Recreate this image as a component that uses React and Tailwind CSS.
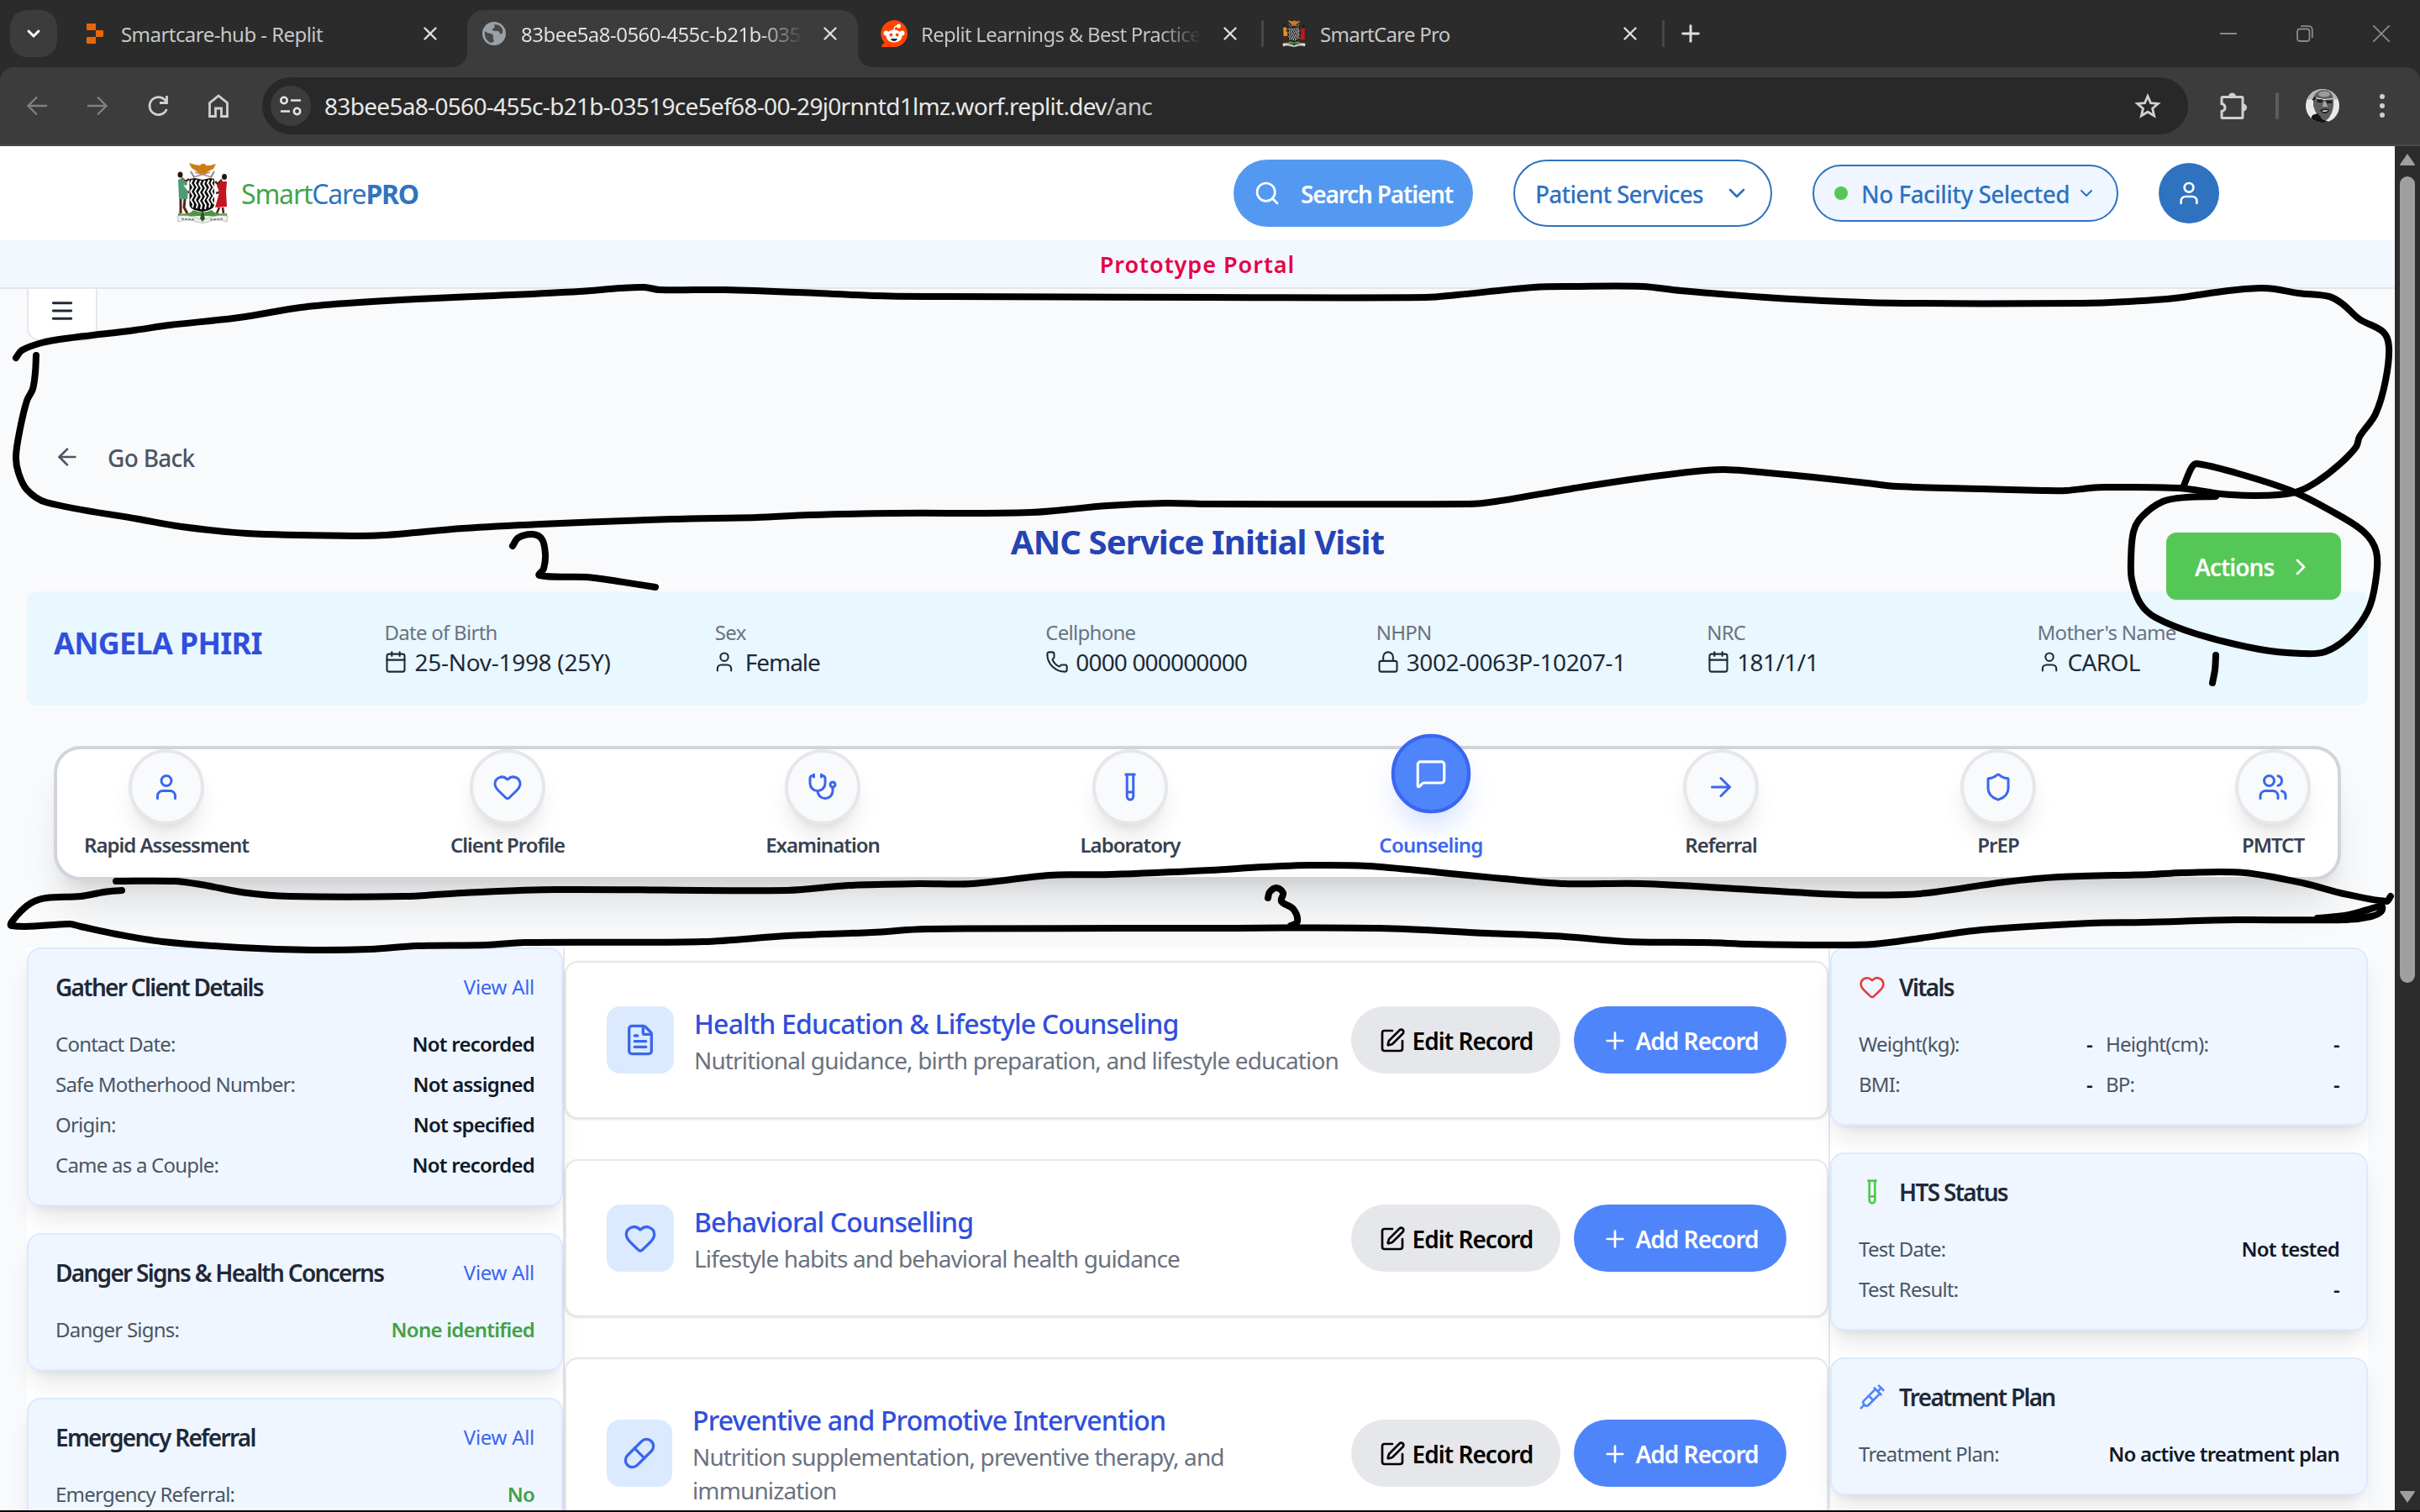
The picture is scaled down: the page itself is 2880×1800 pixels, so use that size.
import React from "react";
import {
  Calendar, User, Phone, Lock, Heart, Stethoscope, TestTube, MessageSquare, ArrowRight, ArrowLeft, Shield, Users,
  FileText, Pill, Syringe, Plus, Search, ChevronDown, ChevronRight, Menu, X, SquarePen,
} from "lucide-react";

function Crest({ className, man = "#4f9a75" }) {
  return (
    <svg viewBox="0 0 62 72" className={className}>
      <path d="M15 0 L22 2 L28 3 L30 1 L34 1 L35 3 L40 3 L47 1 L44 7 L38 10 L34 13 L28 13 L24 10 L18 6Z" fill="#cf7d12" />
      <path d="M20 17 L40 11 M42 17 L22 11" stroke="#b98a78" strokeWidth="1.500" />
      <path d="M17 10 L21 17 M45 10 L41 17" stroke="#8a8a8a" strokeWidth="2" />
      <path d="M15.500 19 L22 18 L31 20 L40 18 L45 19 V50 Q44 56 31 58 Q16 56 15.500 50Z" fill="#0c0c0c" />
      <path d="M19 20 l-2 4 l3 5 l-3 5 l3 5 l-3 5 l3 5 l-1 4 M24 20 l-2 4 l3 5 l-3 5 l3 5 l-3 5 l3 5 l-1 5 M29 21 l-2 4 l3 5 l-3 5 l3 5 l-3 5 l3 5 l-1 5 M34 21 l-2 4 l3 5 l-3 5 l3 5 l-3 5 l3 5 l-1 5 M39 20 l-2 4 l3 5 l-3 5 l3 5 l-3 5 l3 5 l-1 4 M43.500 20 l-2 4 l3 5 l-3 5 l3 5 l-3 5 l3 5" stroke="#fff" strokeWidth="1.900" fill="none" strokeLinejoin="round" />
      <path d="M6 18 L11 22 L15 19 M6 32 L15 35 M54 20 L49 25 L46 22 M54 34 L47 36" stroke="#5a2416" strokeWidth="2.500" fill="none" />
      <ellipse cx="4.500" cy="14" rx="3" ry="3.500" fill="#2a150e" />
      <path d="M2 20 L7 18 L13 24 L12 27 L8 26 L14 34 L13 43 L3 43Z" fill={man} />
      <path d="M5 43 L5 60 M10 43 L9 53 L13 60" stroke="#5a2416" strokeWidth="3" fill="none" />
      <ellipse cx="57" cy="16.500" rx="3" ry="3.500" fill="#2a150e" />
      <path d="M53 22 L60 22 L59 34 L60 52 L46 53 L51 35 L48 27Z" fill="#c3161f" />
      <path d="M51 53 L48 60 M55 53 L56 60" stroke="#5a2416" strokeWidth="2.600" />
      <path d="M2 60 Q16 62 20 56 Q31 61 42 56 Q46 62 60 60 L60 65 Q31 61 2 65Z" fill="#4f9440" />
      <path d="M1 63 Q14 61 25 66 Q31 69 37 66 Q48 61 61 63 L60 70 Q48 66 38 70 Q31 73 24 70 Q14 66 2 70Z" fill="#f1f1ef" stroke="#a5a5a5" strokeWidth="0.700" />
      <path d="M31 56 L34 66 L31 70 L28 66Z" fill="#1d5b1b" />
      <path d="M6 66.500 L22 67.500 M40 67.500 L56 66.500" stroke="#777" strokeWidth="1.500" strokeDasharray="3 1" />
    </svg>
  );
}

function TabClose({ className = "" }) {
  return <X className={"size-[26px] shrink-0 text-[#dedede] " + className} strokeWidth={2.2} />;
}

function TabStrip() {
  return (
    <div className="flex h-20 items-center bg-[#2b2b2b] text-[24px] text-[#c7c7c7]">
      <div className="ml-3 flex size-14 items-center justify-center rounded-[20px] bg-[#3c3c3c]">
        <ChevronDown className="size-6 text-white" strokeWidth={3} />
      </div>
      <div className="ml-[35px] flex w-[453px] items-center">
        <svg viewBox="0 0 20 24" className="h-6 w-5 shrink-0">
          <path d="M1 0H10Q11 0 11 1V8H1Q0 8 0 7V1Q0 0 1 0ZM11 8H19Q20 8 20 9V15Q20 16 19 16H11ZM0 17Q0 16 1 16H11V23Q11 24 10 24H1Q0 24 0 23Z" fill="#ec6608" />
        </svg>
        <span className="ml-[21px] mt-[2px] flex-1 tracking-[-0.023em]">Smartcare-hub - Replit</span>
        <TabClose className="mr-[31px]" />
      </div>
      <div className="relative flex h-[68px] w-[465px] items-center self-end rounded-t-[20px] bg-[#3c3c3c] pb-3 pl-[18px]">
        <svg viewBox="0 0 20 20" className="absolute -left-5 bottom-0 size-5"><path d="M20 0V20H0Q20 20 20 0Z" fill="#3c3c3c" /></svg>
        <svg viewBox="0 0 20 20" className="absolute -right-5 bottom-0 size-5"><path d="M0 0V20H20Q0 20 0 0Z" fill="#3c3c3c" /></svg>
        <svg viewBox="0 0 28 28" className="size-7 shrink-0">
          <circle cx="14" cy="14" r="14" fill="#9aa0a6" />
          <path d="M3 11 Q6 14 10 14 Q14 15 13 18 Q12 20 14 23 Q10 27 7 23 Q2 19 3 11ZM14 3 Q22 3 24 9 Q25 16 21 14 Q20 10 16 11 Q11 11 12 8 Q16 8 14 3Z" fill="#45484b" />
        </svg>
        <span className="ml-[18px] mt-[2px] w-[336px] overflow-hidden whitespace-nowrap bg-gradient-to-r from-[#e3e3e3] from-85% to-[#3c3c3c] bg-clip-text tracking-[-0.022em] text-transparent">83bee5a8-0560-455c-b21b-035</span>
        <TabClose className="ml-[19px]" />
      </div>
      <div className="ml-[27px] flex w-[453px] items-center">
        <svg viewBox="0 0 32 32" className="size-8 shrink-0">
          <path d="M16 0A16 16 0 1 1 16 32H2Q0 31 2 29L4.700 27A16 16 0 0 1 16 0Z" fill="#ff4500" />
          <circle cx="6.500" cy="15.500" r="3" fill="#fff" /><circle cx="25.500" cy="15.500" r="3" fill="#fff" />
          <ellipse cx="16" cy="19" rx="9.500" ry="7.500" fill="#fff" />
          <circle cx="21.500" cy="7" r="2.500" fill="#fff" /><path d="M16 12Q16 7 20 7" stroke="#fff" strokeWidth="1.300" fill="none" />
          <circle cx="12.300" cy="17.500" r="1.900" fill="#ff4500" /><circle cx="19.700" cy="17.500" r="1.900" fill="#ff4500" />
          <path d="M12 22H20Q19 25 16 25T12 22Z" fill="#223" />
        </svg>
        <span className="ml-[16px] mt-[2px] w-[334px] overflow-hidden whitespace-nowrap bg-gradient-to-r from-[#c7c7c7] from-85% to-[#2b2b2b] bg-clip-text tracking-[-0.031em] text-transparent">Replit Learnings &amp; Best Practice</span>
        <TabClose className="ml-[21px]" />
      </div>
      <div className="h-8 w-[3px] rounded bg-[#474747]" />
      <Crest className="ml-[20px] h-8 w-8" man="#e0901c" />
      <span className="ml-[15px] mt-[2px] w-[356px] tracking-[-0.03em]">SmartCare Pro</span>
      <TabClose />
      <div className="ml-[25px] h-8 w-[3px] rounded bg-[#474747]" />
      <Plus className="ml-[15px] size-8 text-[#dedede]" strokeWidth={2.2} />
      <div className="ml-auto mr-[36px] flex items-center gap-[71px]">
        <div className="h-[2px] w-5 bg-[#8a8a8a]" />
        <svg viewBox="0 0 20 20" className="size-5" fill="none" stroke="#8a8a8a" strokeWidth="1.800">
          <rect x="1" y="4.500" width="14.500" height="14.500" rx="3" /><path d="M5 1.200H14Q18.800 1.200 18.800 6V15" />
        </svg>
        <svg viewBox="0 0 20 20" className="size-5" stroke="#8a8a8a" strokeWidth="1.800"><path d="M0 0L20 20M20 0L0 20" /></svg>
      </div>
    </div>
  );
}

function Toolbar() {
  return (
    <div className="bg-[#2b2b2b]">
      <div className="flex h-[94px] items-center rounded-t-2xl border-b-2 border-[#4a4a4a] bg-[#3c3c3c]">
        <svg viewBox="0 0 24 24" className="ml-8 size-6" fill="none" stroke="#808080" strokeWidth="2.300"><path d="M24 12H2M12 1.500L1.500 12L12 22.500" /></svg>
        <svg viewBox="0 0 24 24" className="ml-12 size-6" fill="none" stroke="#808080" strokeWidth="2.300"><path d="M0 12H22M12 1.500L22.500 12L12 22.500" /></svg>
        <svg viewBox="0 0 24 26" className="ml-12 h-[26px] w-6" fill="none" stroke="#d0d0d0" strokeWidth="2.800"><path d="M22.500 1V9.500H14M22 8.500A10.500 10.500 0 1 0 22.300 17" /></svg>
        <svg viewBox="0 0 24 28" className="ml-12 h-7 w-6" fill="none" stroke="#d0d0d0" strokeWidth="2.800"><path d="M1.500 10.500L12 2L22.500 10.500V26.500H15.500V17H8.500V26.500H1.500Z" /></svg>
        <div className="ml-10 flex h-[68px] w-[2292px] items-center rounded-full bg-[#282828]">
          <div className="ml-[10px] flex size-12 items-center justify-center rounded-full bg-[#3c3c3c]">
            <svg viewBox="0 0 26 24" className="h-6 w-[26px]" fill="none" stroke="#e3e3e3" strokeWidth="2.600"><circle cx="5" cy="5.500" r="3.700" /><path d="M13 5.500H25M1 18.500H12" /><circle cx="20.500" cy="18.500" r="3.700" /></svg>
          </div>
          <span className="ml-4 whitespace-nowrap text-[28px] tracking-[-0.0245em] text-[#e8e8e8]">83bee5a8-0560-455c-b21b-03519ce5ef68-00-29j0rnntd1lmz.worf.replit.dev<span className="text-[#c4c7c5]">/anc</span></span>
          <svg viewBox="0 0 32 30" className="ml-auto mr-[32px] h-[30px] w-8" fill="none" stroke="#d0d0d0" strokeWidth="2.800"><path d="M16 3.500L19.500 11.600L28.300 12.400L21.600 18.200L23.600 26.800L16 22.200L8.400 26.800L10.400 18.200L3.700 12.400L12.500 11.600Z" /></svg>
        </div>
        <svg viewBox="0 0 32 32" className="ml-[38px] size-8">
          <path d="M3 5.500H26Q27 5.500 27 6.500V29.500Q27 30.500 26 30.500H3Q2 30.500 2 29.500V22.500Q6 21.500 6 18T2 13.500V6.500Q2 5.500 3 5.500Z" fill="none" stroke="#d0d0d0" strokeWidth="3" />
          <path d="M10 5A4.500 4.500 0 0 1 19 5ZM27.500 13.500A4.500 4.500 0 0 1 27.500 22.500Z" fill="#d0d0d0" />
        </svg>
        <div className="ml-[34px] h-8 w-1 rounded bg-[#5c5c5c]" />
        <svg viewBox="0 0 40 40" className="ml-[32px] size-10">
          <clipPath id="avatarClip"><circle cx="20" cy="20" r="20" /></clipPath>
          <g clipPath="url(#avatarClip)">
            <rect width="40" height="40" fill="#e9e9e9" />
            <path d="M0 13V0H40V13Q34 11 31 14L9 12Z" fill="#b5b5b5" />
            <path d="M9 10Q13 1 22 1T33 12Q34 24 29 32Q26 38 22 37Q12 32 9 20Z" fill="#5d5d5d" />
            <ellipse cx="22" cy="6" rx="7" ry="3.500" fill="#9a9a9a" />
            <path d="M8 13L12 10" stroke="#111" strokeWidth="2" />
            <path d="M12 10.500L22 12.500L33 11.500" stroke="#eee" strokeWidth="1.200" fill="none" />
            <path d="M13 12.500H20V16H14ZM24 13.500H31V17H25Z" fill="#1d1d1d" />
            <path d="M21 15L20 21H26L24 15Z" fill="#a5a5a5" />
            <path d="M17 25Q22 22 28 24Q28 29 22 29Q18 28 17 25Z" fill="#222" />
            <path d="M19 26Q23 28 27 25.500Q23 25 19 26Z" fill="#fff" />
            <path d="M8 31L14 29L20 36L30 40H4Z" fill="#151515" />
          </g>
        </svg>
        <div className="ml-[48px] flex flex-col gap-[5px]">
          <div className="size-[6px] rounded-full bg-[#d0d0d0]" /><div className="size-[6px] rounded-full bg-[#d0d0d0]" /><div className="size-[6px] rounded-full bg-[#d0d0d0]" />
        </div>
      </div>
    </div>
  );
}

function SiteHeader() {
  return (
    <header>
      <div className="flex h-28 items-center bg-white text-[28px]">
        <Crest className="ml-[210px] h-[72px] w-[62px]" />
        <div className="ml-[15px] pt-[2px] text-[32px] tracking-[-0.037em] text-[#2f74c0]"><span className="text-[#43a649]">Smart</span>Care<span className="font-bold">PRO</span></div>
        <button className="ml-auto flex h-20 w-[285px] items-center rounded-full bg-[#5499f1] pl-6 pt-[2px] font-semibold tracking-[-0.042em] text-white">
          <Search className="-mt-[2px] mr-6 size-8" strokeWidth={2} />Search Patient
        </button>
        <button className="ml-12 flex h-20 w-[308px] items-center justify-between rounded-full border-2 border-[#2f72c0] pl-[24px] pr-6 font-medium tracking-[-0.027em] text-[#2f72c0]">
          <span className="pt-px">Patient Services</span><ChevronDown className="size-8" strokeWidth={2} />
        </button>
        <button className="ml-12 flex h-[68px] w-[364px] items-center rounded-full border-2 border-[#2f72c0] bg-[#eff6ff] pl-6 font-medium tracking-[-0.02em] text-[#2f72c0]">
          <span className="mr-4 size-4 rounded-full bg-[#55c757]" /><span className="w-[250px] whitespace-nowrap pt-px text-left">No Facility Selected</span><ChevronDown className="ml-[6px] size-6" strokeWidth={2} />
        </button>
        <div className="ml-12 mr-[209px] flex size-[72px] items-center justify-center rounded-full bg-[#2f72c0]"><User className="size-8 text-white" /></div>
      </div>
      <div className="flex h-[58px] items-center justify-center border-b-2 border-[#e5e7eb] bg-[#f3f8ff] pt-[2px] text-[27px] font-semibold tracking-[0.036em] text-[#e60045]">Prototype Portal</div>
    </header>
  );
}

const patient = [
  ["Date of Birth", "25-Nov-1998 (25Y)", Calendar, "tracking-[-0.01em]"],
  ["Sex", "Female", User, "tracking-[-0.038em]"],
  ["Cellphone", "0000 000000000", Phone, "tracking-[-0.03em]"],
  ["NHPN", "3002-0063P-10207-1", Lock, "tracking-[-0.014em]"],
  ["NRC", "181/1/1", Calendar, "tracking-[-0.02em]"],
  ["Mother's Name", "CAROL", User, "tracking-[-0.025em]"],
];

function PatientBar() {
  return (
    <section className="mx-8 grid h-[136px] grid-cols-7 gap-8 rounded-xl bg-[#e9f7fe] px-8 pt-8">
      <div className="whitespace-nowrap pt-[6px] text-[36px] font-bold leading-[48px] tracking-[-0.02em] text-[#304fdd]">ANGELA PHIRI</div>
      {patient.map(([label, value, Icon, tracking]) => (
        <div key={label} className="whitespace-nowrap pt-px">
          <div className="text-[24px] leading-8 tracking-[-0.03em] text-[#6b7280]">{label}</div>
          <div className={"flex items-center gap-2 text-[28px] leading-[38px] text-[#1f2937] " + tracking}><Icon className={label === "Sex" ? "-ml-[3px] mr-[3px] size-7" : "size-7"} strokeWidth={1.8} />{value}</div>
        </div>
      ))}
    </section>
  );
}

const steps = [
  ["Rapid Assessment", User, "w-[196px]"],
  ["Client Profile", Heart, "w-[140px]"],
  ["Examination", Stethoscope, "w-[134px]"],
  ["Laboratory", TestTube, "w-[122px]"],
  ["Counseling", MessageSquare, "w-[118px]"],
  ["Referral", ArrowRight, "w-[96px]"],
  ["PrEP", Shield, "w-[88px]"],
  ["PMTCT", Users, "w-[90px]"],
];

function Stepper() {
  return (
    <nav className="mx-16 mt-12 flex h-40 justify-between rounded-[32px] border-4 border-[#d1d5db] bg-white px-8 shadow-[0_40px_50px_-10px_rgba(0,0,0,0.1),0_16px_20px_-12px_rgba(0,0,0,0.1)]">
      {steps.map(([label, Icon, width]) => {
        const active = label === "Counseling";
        return (
          <div key={label} className={"flex flex-col items-center " + width}>
            <div className={active
              ? "flex size-[90px] shrink-0 -translate-y-4 scale-105 items-center justify-center rounded-full border-4 border-[#3b66f0] bg-[#4f85fb] text-white shadow-[0_20px_30px_-6px_rgba(79,133,251,0.25)]"
              : "flex size-[90px] shrink-0 items-center justify-center rounded-full border-4 border-[#e5e7eb] bg-[#f9fafb] text-[#3b66f0] shadow-[0_20px_30px_-6px_rgba(0,0,0,0.1),0_8px_12px_-8px_rgba(0,0,0,0.1)]"}>
              <Icon className="size-9" strokeWidth={2} />
            </div>
            <div className={"mt-2 whitespace-nowrap text-[24px] font-semibold leading-8 " + (active ? "tracking-[-0.03em] text-[#3b66f0]" : "tracking-[-0.042em] text-[#374151]")}>{label}</div>
          </div>
        );
      })}
    </nav>
  );
}

function Row({ label, value, color = "text-[#111827]" }) {
  return (
    <div className="flex h-8 items-center justify-between whitespace-nowrap text-[24px] tracking-[-0.032em]">
      <span className="text-[#4b5563]">{label}</span><span className={"font-semibold " + color}>{value}</span>
    </div>
  );
}

function SideCard({ title, icon, action, children }) {
  return (
    <div className="shrink-0 rounded-2xl border-2 border-[#dbeafe] bg-[#eff6ff] px-8 pb-[31px] pt-[29px] shadow-[0_20px_30px_-6px_rgba(0,0,0,0.1),0_8px_12px_-8px_rgba(0,0,0,0.1)]">
      <div className="mb-9 flex h-8 items-center whitespace-nowrap">
        {icon}<h3 className="text-[28px] font-semibold tracking-[-0.061em] text-[#1f2937]">{title}</h3>
        {action && <span className="ml-auto text-[24px] tracking-[-0.012em] text-[#3b66f0]">View All</span>}
      </div>
      {children}
    </div>
  );
}

const records = [
  ["Health Education & Lifestyle Counseling", "Nutritional guidance, birth preparation, and lifestyle education", FileText, "h-[188px]", "w-20"],
  ["Behavioral Counselling", "Lifestyle habits and behavioral health guidance", Heart, "h-[188px]", "w-20"],
  ["Preventive and Promotive Intervention", "Nutrition supplementation, preventive therapy, and immunization", Pill, "h-[228px]", "w-[78px]"],
];

function RecordCard({ title, text, Icon, height, iconWidth }) {
  return (
    <div className={"flex shrink-0 items-center rounded-2xl border-2 border-[#e5e7eb] bg-white px-12 shadow-sm " + height}>
      <div className={"flex h-20 shrink-0 items-center justify-center rounded-2xl bg-[#dbeafe] " + iconWidth}><Icon className="size-10 text-[#3b66f0]" strokeWidth={2} /></div>
      <div className="ml-6 mr-auto w-[776px] shrink-0">
        <h3 className="whitespace-nowrap pt-px text-[32px] font-medium leading-[47px] tracking-[-0.026em] text-[#304fdd]">{title}</h3>
        <p className="text-[28px] leading-10 tracking-[-0.031em] text-[#6b7280]">{text}</p>
      </div>
      <button className="flex h-20 w-[249px] shrink-0 items-center justify-center gap-2 whitespace-nowrap rounded-full bg-[#e5e7eb] pt-px text-[28px] font-semibold tracking-[-0.035em] text-black"><SquarePen className="size-8" />Edit Record</button>
      <button className="ml-4 flex h-20 w-[253px] shrink-0 items-center justify-center gap-2 whitespace-nowrap rounded-full bg-[#4f85fb] pt-px text-[28px] font-semibold tracking-[-0.035em] text-white"><Plus className="size-8" />Add Record</button>
    </div>
  );
}

const inkStrokes = [
  "19,426 26,417 50,408 78,403 161,393 202,387 285,378 358,366 413,361 496,356 588,352 689,347 739,343 767,342 785,345 863,345 973,349 1038,352 1102,353 1440,354 1697,354 1734,351 1826,342 1872,341 1954,341 2000,346 2101,354 2193,359 2266,361 2478,361 2533,359 2588,355 2652,346 2689,343 2707,344 2735,349 2772,353 2788,362 2808,380 2836,395 2843,413 2839,453 2827,493 2808,520 2804,532 2785,552 2758,573 2735,585 2712,589 2680,590 2643,588 2593,581 2505,580 2487,581 2459,584 2432,584 2358,582 2257,579 2221,575 2147,567 2083,561 2051,559 2019,561 1954,569 1881,580 1780,597 1748,600 1440,600 1387,599 1318,602 1226,610 1065,611 964,613 900,616 799,618 643,624 551,629 459,637 422,638 294,635 216,627 165,618 55,598 32,583 22,563 19,543 24,510 32,477 39,463 42,443 43,423",
  "610,650 617,640 634,636 645,642 649,660 647,677 642,685 698,687 735,692 780,699",
  "2599,578 2608,557 2614,552 2661,563 2726,584 2772,607 2813,633 2828,657 2827,693 2818,727 2795,758 2767,776 2739,778 2689,773 2615,755 2565,735 2547,718 2537,690 2536,667 2539,633 2549,615 2574,597 2602,592 2637,591",
  "2637,780 2636,797 2633,813",
  "145,1060 124,1062 96,1067 55,1069 37,1075 20,1090 14,1102 83,1100 96,1103 138,1112 193,1121 285,1128 372,1131 441,1130 496,1126 579,1125 624,1122 836,1121 937,1114 1038,1110 1102,1106 1440,1105 1642,1105 1771,1111 1862,1115 1936,1121 2028,1122 2083,1124 2175,1125 2230,1124 2285,1117 2358,1107 2487,1099 2551,1098 2661,1095 2790,1095 2822,1091 2834,1085 2834,1079 2818,1083 2790,1090 2758,1093",
  "138,1049 207,1049 239,1053 294,1063 344,1067 482,1067 551,1063 661,1059 937,1060 1010,1054 1093,1052 1157,1052 1249,1042 1322,1041 1440,1036 1504,1032 1559,1030 1628,1031 1716,1039 1789,1046 1862,1052 1954,1052 2083,1059 2193,1065 2267,1065 2303,1062 2386,1050 2450,1044 2560,1041 2597,1039 2671,1039 2744,1052 2785,1063 2840,1073 2845,1067",
  "1509,1069 1511,1062 1519,1057 1527,1063 1525,1073 1539,1082 1544,1097 1536,1102",
];

// Catmull-Rom style curve through every point; handle length is limited so that uneven spacing does not overshoot.
function smoothPath(points) {
  const p = points.split(" ").map((s) => s.split(",").map(Number));
  const at = (i) => p[Math.max(0, Math.min(p.length - 1, i))];
  const dist = (a, b) => Math.hypot(a[0] - b[0], a[1] - b[1]) || 1;
  let d = "M" + p[0].join(" ");
  for (let i = 0; i < p.length - 1; i++) {
    const [a, b, c, e] = [at(i - 1), at(i), at(i + 1), at(i + 2)];
    const len = dist(b, c) / 3;
    const t1 = dist(a, c);
    const t2 = dist(b, e);
    d += `C${b[0] + ((c[0] - a[0]) / t1) * len} ${b[1] + ((c[1] - a[1]) / t1) * len} ${c[0] - ((e[0] - b[0]) / t2) * len} ${c[1] - ((e[1] - b[1]) / t2) * len} ${c[0]} ${c[1]}`;
  }
  return d;
}

function InkOverlay() {
  return (
    <svg viewBox="0 0 2880 1800" className="pointer-events-none absolute left-0 top-0 h-[1800px] w-[2880px]" fill="none" stroke="#000" strokeWidth="8" strokeLinecap="round" strokeLinejoin="round">
      {inkStrokes.map((s) => <path key={s} d={smoothPath(s)} />)}
    </svg>
  );
}

export default function App() {
  return (
    <div className="relative flex h-[1800px] w-[2880px] flex-col overflow-hidden border-b-2 border-black bg-[#f9fafc] font-['Noto_Sans',sans-serif]">
      <TabStrip />
      <Toolbar />
      <div className="flex min-h-0 flex-1">
        <main className="flex w-[2850px] flex-col">
          <SiteHeader />
          <div className="ml-8 flex h-[62px] w-[84px] shrink-0 items-center justify-center rounded-b-2xl border-x-2 border-b-2 border-[#e5e7eb] bg-white pb-2"><Menu className="size-8 text-[#1f2937]" strokeWidth={2.2} /></div>
          <div className="ml-16 mt-[114px] flex h-12 shrink-0 items-center gap-[32px] text-[28px] font-medium tracking-[-0.025em] text-[#4b5563]"><ArrowLeft className="size-8" /><span className="pt-px">Go Back</span></div>
          <div className="relative h-[136px] shrink-0 pt-[49px] text-center">
            <h1 className="text-[40px] font-bold leading-[56px] tracking-[-0.022em] text-[#2643b5]">ANC Service Initial Visit</h1>
            <button className="absolute right-[64px] top-[66px] flex h-20 w-[208px] items-center gap-4 rounded-xl bg-[#55c757] pl-[34px] pt-px text-[28px] font-semibold tracking-[-0.035em] text-white">Actions<ChevronRight className="size-8" /></button>
          </div>
          <PatientBar />
          <Stepper />
          <div className="mx-8 mt-20 flex min-h-0 flex-1 bg-white">
            <div className="flex w-[640px] shrink-0 flex-col gap-8 border-r-2 border-[#e5e7eb]">
              <SideCard title="Gather Client Details" action>
                <div className="flex flex-col gap-4">
                  <Row label="Contact Date:" value="Not recorded" />
                  <Row label="Safe Motherhood Number:" value="Not assigned" />
                  <Row label="Origin:" value="Not specified" />
                  <Row label="Came as a Couple:" value="Not recorded" />
                </div>
              </SideCard>
              <SideCard title="Danger Signs & Health Concerns" action><Row label="Danger Signs:" value="None identified" color="text-[#43a047]" /></SideCard>
              <SideCard title="Emergency Referral" action><Row label="Emergency Referral:" value="No" color="text-[#43a047]" /></SideCard>
            </div>
            <div className="flex w-[1504px] shrink-0 flex-col gap-12 pt-4">
              {records.map(([title, text, Icon, height, iconWidth]) => <RecordCard key={title} title={title} text={text} Icon={Icon} height={height} iconWidth={iconWidth} />)}
            </div>
            <div className="flex min-w-0 flex-1 flex-col gap-8 border-l-2 border-[#e5e7eb]">
              <SideCard title="Vitals" icon={<Heart className="mr-4 size-8 text-[#e53e3e]" />}>
                <div className="grid grid-cols-2 gap-4">
                  <Row label="Weight(kg):" value="-" /><Row label="Height(cm):" value="-" /><Row label="BMI:" value="-" /><Row label="BP:" value="-" />
                </div>
              </SideCard>
              <SideCard title="HTS Status" icon={<TestTube className="mr-4 size-8 text-[#55c757]" />}>
                <div className="flex flex-col gap-4"><Row label="Test Date:" value="Not tested" /><Row label="Test Result:" value="-" /></div>
              </SideCard>
              <SideCard title="Treatment Plan" icon={<Syringe className="mr-4 size-8 text-[#4f85fb]" />}><Row label="Treatment Plan:" value="No active treatment plan" /></SideCard>
            </div>
          </div>
        </main>
        <div className="flex w-[30px] flex-col items-center bg-[#2c2c2c]">
          <svg viewBox="0 0 18 14" className="mt-[9px] h-[14px] w-[18px]"><path d="M9 0L18 13Q18 14 17 14H1Q0 14 0 13Z" fill="#9f9f9f" /></svg>
          <div className="mt-[13px] h-[960px] w-[18px] rounded-full bg-[#9f9f9f]" />
          <svg viewBox="0 0 18 14" className="mb-[9px] mt-auto h-[14px] w-[18px]"><path d="M9 14L18 1Q18 0 17 0H1Q0 0 0 1Z" fill="#9f9f9f" /></svg>
        </div>
      </div>
      <InkOverlay />
    </div>
  );
}
